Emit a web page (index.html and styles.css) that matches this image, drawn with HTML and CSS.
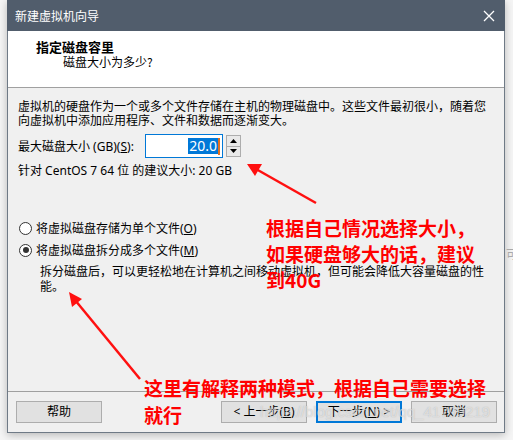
FILE: index.html
```html
<!DOCTYPE html>
<html lang="zh-CN">
<head>
<meta charset="utf-8">
<title>新建虚拟机向导</title>
<link rel="stylesheet" href="styles.css">
</head>
<body>
<div class="window">
  <div class="titlebar">
    <span class="title">新建虚拟机向导</span>
    <svg class="close" width="12" height="12" viewBox="0 0 12 12"><path d="M1 1L11 11M11 1L1 11" stroke="#fff" stroke-width="1.3" fill="none"/></svg>
  </div>
  <div class="header">
    <div class="h-title">指定磁盘容里</div>
    <div class="h-sub">磁盘大小为多少?</div>
  </div>
  <div class="content">
    <p class="intro">虚拟机的硬盘作为一个或多个文件存储在主机的物理磁盘中。这些文件最初很小，随着您<br>向虚拟机中添加应用程序、文件和数据而逐渐变大。</p>
    <div class="size-row">
      <span class="label">最大磁盘大小 (GB)(<u>S</u>):</span>
      <div class="input"><span class="sel">20.0</span><span class="caret"></span></div>
      <div class="spin">
        <div class="spin-btn"><svg width="7" height="4" viewBox="0 0 7 4"><path d="M0 4L3.5 0L7 4Z" fill="#000"/></svg></div>
        <div class="spin-btn"><svg width="7" height="4" viewBox="0 0 7 4"><path d="M0 0L3.5 4L7 0Z" fill="#000"/></svg></div>
      </div>
    </div>
    <div class="recommend">针对 CentOS 7 64 位 的建议大小: 20 GB</div>
    <div class="radios">
      <div class="radio-row"><span class="radio"></span><span>将虚拟磁盘存储为单个文件(<u>O</u>)</span></div>
      <div class="radio-row"><span class="radio checked"></span><span>将虚拟磁盘拆分成多个文件(<u>M</u>)</span></div>
      <p class="desc">拆分磁盘后，可以更轻松地在计算机之间移动虚拟机，但可能会降低大容量磁盘的性<br>能。</p>
    </div>
  </div>
  <div class="footer">
    <button class="btn">帮助</button>
    <div class="spacer"></div>
    <button class="btn">&lt; 上一步(<u>B</u>)</button>
    <button class="btn default">下一步(<u>N</u>) &gt;</button>
    <button class="btn">取消</button>
  </div>
</div>
<span class="behind">可</span>
<div class="note note1">根据自己情况选择大小，<br>如果硬盘够大的话，建议<br>到40G</div>
<div class="note note2">这里有解释两种模式，根据自己需要选择<br>就行</div>
<svg class="arrows" width="513" height="440" viewBox="0 0 513 440">
  <path d="M316 203L256 169" stroke="#ff1010" stroke-width="2.5" fill="none"/>
  <path d="M247 164L262 164L255 176Z" fill="#ff1010"/>
  <path d="M140 379L75 300" stroke="#ff1010" stroke-width="2.5" fill="none"/>
  <path d="M69 292L82 299L72 307Z" fill="#ff1010"/>
</svg>
<div class="watermark">https://blog.csdn.net/qq_41799219</div>
</body>
</html>
```
FILE: styles.css
```css
* { box-sizing: border-box; }
html, body { margin: 0; padding: 0; }
body {
  width: 513px;
  height: 440px;
  background: #f5f5f5;
  font-family: "Noto Sans", "Noto Sans CJK SC", sans-serif;
  font-size: 12px;
  color: #000;
  position: relative;
  overflow: hidden;
}
.window {
  margin-left: 7px;
  width: 498px;
  height: 433px;
  background: #f0f0f0;
  border: 1px solid #6f7a86;
  border-top: none;
  display: flex;
  flex-direction: column;
  box-shadow: 0 2px 8px rgba(0,0,0,0.25);
}
.titlebar {
  height: 31px;
  background: #515d6c;
  color: #fff;
  display: flex;
  align-items: center;
  justify-content: space-between;
  padding: 0 10px 0 8px;
  margin: 0 -1px;
}
.title { font-family: "Noto Sans CJK SC", sans-serif; font-size: 12px; }
.close { display: block; }
.header {
  height: 57px;
  background: #fff;
  border-bottom: 1px solid #a0a0a0;
  padding: 8px 0 0 28px;
}
.h-title {
  font-family: "Noto Sans CJK SC", sans-serif;
  font-weight: bold;
  font-size: 13px;
  line-height: 16px;
}
.h-sub {
  font-family: "Noto Sans CJK SC", sans-serif;
  font-size: 12px;
  line-height: 14px;
  padding-left: 27px;
}
.content {
  padding: 11px 0 0 10px;
}
.intro {
  margin: 0;
  line-height: 14px;
  font-family: "Noto Sans CJK SC", sans-serif;
}
.size-row {
  display: flex;
  align-items: center;
  margin-top: 7px;
  height: 24px;
}
.label { width: 127px; }
.input {
  width: 78px;
  height: 24px;
  border: 1px solid #0078d7;
  background: #fff;
  display: flex;
  align-items: center;
  justify-content: flex-end;
  padding-right: 2px;
}
.sel {
  background: #0078d7;
  color: #fff;
  font-size: 14px;
  line-height: 16px;
  padding: 0 1px;
}
.caret { width: 2px; height: 17px; background: #e07020; }
.spin {
  margin-left: 3px;
  width: 15px;
  height: 22px;
  border: 1px solid #adadad;
  display: flex;
  flex-direction: column;
}
.spin-btn {
  flex: 1;
  background: #e9e9e9;
  display: flex;
  align-items: center;
  justify-content: center;
}
.spin-btn + .spin-btn { border-top: 1px solid #adadad; }
.spin-btn svg { display: block; }
.recommend {
  margin-top: 6px;
  line-height: 14px;
}
.radios { margin-top: 40px; }
.radio-row {
  display: flex;
  align-items: center;
  height: 20px;
  margin-bottom: 2px;
  gap: 4px;
}
.radio {
  width: 13px;
  height: 13px;
  border: 1px solid #333;
  border-radius: 50%;
  background: #fff;
  margin-left: 1px;
  position: relative;
}
.radio.checked::after {
  content: "";
  position: absolute;
  left: 2.5px;
  top: 2.5px;
  width: 6px;
  height: 6px;
  border-radius: 50%;
  background: #333;
}
.desc {
  margin: 3px 0 0 22px;
  line-height: 15px;
  font-family: "Noto Sans CJK SC", sans-serif;
}
.footer {
  margin-top: auto;
  border-top: 1px solid #a0a0a0;
  height: 41px;
  display: flex;
  align-items: flex-start;
  padding: 9px 7px 0 8px;
  gap: 9px;
}
.spacer { flex: 1; }
.btn {
  width: 86px;
  height: 22px;
  background: #e1e1e1;
  border: 1px solid #adadad;
  font-family: "Noto Sans", "Noto Sans CJK SC", sans-serif;
  font-size: 12px;
  color: #000;
  padding: 0;
  line-height: 18px;
}
.btn.default { border: 2px solid #0078d7; }
.behind {
  position: absolute;
  left: 506px;
  top: 245px;
  color: #aaa;
  font-family: "Noto Sans CJK SC", sans-serif;
  font-size: 12px;
}
.note {
  position: absolute;
  color: #ff0000;
  font-family: "Noto Sans CJK SC", sans-serif;
  font-weight: bold;
  font-size: 19px;
  line-height: 26px;
  white-space: nowrap;
}
.note1 { left: 266px; top: 215px; }
.note2 { left: 144px; top: 374px; line-height: 27px; }
.arrows { position: absolute; left: 0; top: 0; pointer-events: none; }
.watermark {
  position: absolute;
  left: 260px;
  top: 403px;
  font-family: "Liberation Sans", sans-serif;
  font-size: 15px;
  color: rgba(255,255,255,0.55);
  text-shadow: 0 0 1px rgba(120,120,120,0.5);
  white-space: nowrap;
}
```
